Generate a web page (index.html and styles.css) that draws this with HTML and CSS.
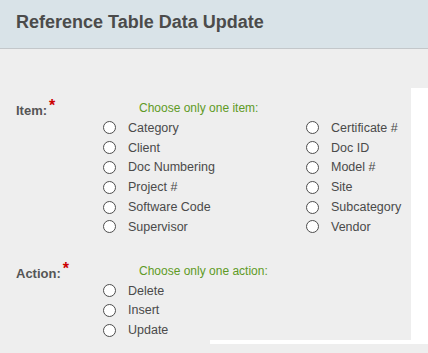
FILE: index.html
```html
<!DOCTYPE html>
<html lang="en">
<head>
    <meta charset="UTF-8">
    <meta name="viewport" content="width=device-width, initial-scale=1.0">
    <title>Reference Table Data Update</title>
    <link rel="stylesheet" href="styles.css">
</head>
<body>
    <div class="header">
        <h1 class="header-title">Reference Table Data Update</h1>
    </div>

    <div class="page">
        <form class="form">
            <div class="field">
                <div class="field-label">Item:<span class="required">*</span></div>
                <div class="field-body">
                    <p class="hint">Choose only one item:</p>
                    <div class="choices">
                        <div class="choices-col">
                            <label class="choice"><input type="radio" name="item"> Category</label>
                            <label class="choice"><input type="radio" name="item"> Client</label>
                            <label class="choice"><input type="radio" name="item"> Doc Numbering</label>
                            <label class="choice"><input type="radio" name="item"> Project #</label>
                            <label class="choice"><input type="radio" name="item"> Software Code</label>
                            <label class="choice"><input type="radio" name="item"> Supervisor</label>
                        </div>
                        <div class="choices-col">
                            <label class="choice"><input type="radio" name="item"> Certificate #</label>
                            <label class="choice"><input type="radio" name="item"> Doc ID</label>
                            <label class="choice"><input type="radio" name="item"> Model #</label>
                            <label class="choice"><input type="radio" name="item"> Site</label>
                            <label class="choice"><input type="radio" name="item"> Subcategory</label>
                            <label class="choice"><input type="radio" name="item"> Vendor</label>
                        </div>
                    </div>
                </div>
            </div>

            <div class="field">
                <div class="field-label">Action:<span class="required">*</span></div>
                <div class="field-body">
                    <p class="hint">Choose only one action:</p>
                    <div class="choices">
                        <div class="choices-col">
                            <label class="choice"><input type="radio" name="action"> Delete</label>
                            <label class="choice"><input type="radio" name="action"> Insert</label>
                            <label class="choice"><input type="radio" name="action"> Update</label>
                        </div>
                    </div>
                </div>
            </div>
        </form>
    </div>
</body>
</html>
```

FILE: styles.css
```css
:root {
    --bg: #eeeeee;
    --header-bg: #d9e3e8;
    --header-line: #c3c7ca;
    --title: #4b4b4b;
    --label: #555555;
    --text: #4a4a4a;
    --hint: #5e9a25;
    --required: #cc0000;
    --white: #ffffff;
}

* {
    margin: 0;
    padding: 0;
    box-sizing: border-box;
}

body {
    font-family: 'Liberation Sans', Arial, sans-serif;
    background-color: var(--bg);
    color: var(--text);
    min-height: 100vh;
    overflow: hidden;
}

.header {
    height: 49px;
    background-color: var(--header-bg);
    border-bottom: 1px solid var(--header-line);
    display: flex;
    align-items: center;
    padding: 0 16px 4px;
}

.header-title {
    font-size: 18px;
    font-weight: bold;
    color: var(--title);
}

.page {
    position: relative;
    height: 304px;
}

/* white sheet peeking out behind the form */
.page::before {
    content: "";
    position: absolute;
    left: 411px;
    right: 0;
    top: 39px;
    height: 256px;
    background: var(--white);
}

.page::after {
    content: "";
    position: absolute;
    left: 210px;
    right: 0;
    top: 291px;
    height: 4px;
    background: var(--white);
}

.form {
    position: relative;
    z-index: 1;
    padding: 52px 16px 0;
}

.field {
    display: grid;
    grid-template-columns: 87px 1fr;
}

.field + .field {
    margin-top: 27px;
}

.field-label {
    font-size: 13px;
    font-weight: bold;
    line-height: 16px;
    color: var(--label);
    margin-top: -3px;
}

.required {
    color: var(--required);
    font-size: 16px;
    vertical-align: 4px;
    margin-left: 2px;
}

.hint {
    font-size: 12px;
    line-height: 14px;
    color: var(--hint);
    padding-left: 36px;
}

.choices {
    display: flex;
    margin-top: 3px;
}

.choices-col {
    width: 203px;
    display: flex;
    flex-direction: column;
}

.choices-col:last-child {
    width: auto;
}

.choice {
    height: 19.8px;
    display: flex;
    align-items: center;
    font-size: 12.5px;
    color: var(--text);
    white-space: nowrap;
}

.choice input {
    appearance: none;
    -webkit-appearance: none;
    width: 13px;
    height: 13px;
    border: 1.3px solid #4d4d4d;
    border-radius: 50%;
    background: var(--white);
    margin-right: 12px;
    flex: 0 0 auto;
}
```
